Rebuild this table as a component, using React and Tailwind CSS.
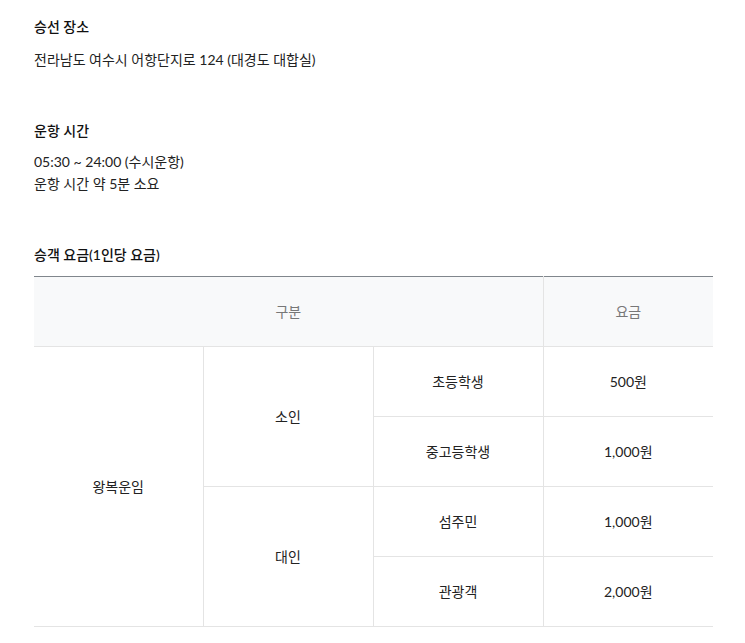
export default function App() {
  const font = { fontFamily: "Lato, 'Noto Sans CJK KR', sans-serif" };
  const td = 'border border-[#e4e4e4] text-center align-middle text-[14px] text-[#222]';

  return (
    <div className="min-h-[643px] w-[745px] bg-white pl-[34px] pt-[16px]" style={font}>
      <h3 className="text-[14px] leading-[22px] font-medium text-[#111]">승선 장소</h3>
      <p className="mt-[11px] text-[14px] leading-[22px] text-[#222]">전라남도 여수시 어항단지로 124 (대경도 대합실)</p>

      <h3 className="mt-[49px] text-[14px] leading-[22px] font-medium text-[#111]">운항 시간</h3>
      <p className="mt-[9px] text-[14px] leading-[22px] text-[#222]">
        05:30 ~ 24:00 (수시운항)
        <br />
        운항 시간 약 5분 소요
      </p>

      <h3 className="mt-[49px] text-[14px] leading-[22px] font-medium text-[#111]">승객 요금(1인당 요금)</h3>

      <table className="mt-[10px] w-[679px] table-fixed border-collapse border-t border-t-[#80868c]">
        <colgroup>
          <col className="w-[169px]" />
          <col className="w-[170px]" />
          <col className="w-[170px]" />
          <col className="w-[170px]" />
        </colgroup>
        <thead>
          <tr className="h-[70px] bg-[#f8f9fa]">
            <th colSpan={3} className="border-b border-r border-[#e4e4e4] text-center text-[14px] font-normal text-[#777]">구분</th>
            <th className="border-b border-[#e4e4e4] text-center text-[14px] font-normal text-[#777]">요금</th>
          </tr>
        </thead>
        <tbody>
          <tr className="h-[70px]">
            <td rowSpan={4} className={td + ' border-l-0'}>왕복운임</td>
            <td rowSpan={2} className={td}>소인</td>
            <td className={td}>초등학생</td>
            <td className={td + ' border-r-0'}>500원</td>
          </tr>
          <tr className="h-[70px]">
            <td className={td}>중고등학생</td>
            <td className={td + ' border-r-0'}>1,000원</td>
          </tr>
          <tr className="h-[70px]">
            <td rowSpan={2} className={td}>대인</td>
            <td className={td}>섬주민</td>
            <td className={td + ' border-r-0'}>1,000원</td>
          </tr>
          <tr className="h-[70px]">
            <td className={td}>관광객</td>
            <td className={td + ' border-r-0'}>2,000원</td>
          </tr>
        </tbody>
      </table>
    </div>
  );
}
